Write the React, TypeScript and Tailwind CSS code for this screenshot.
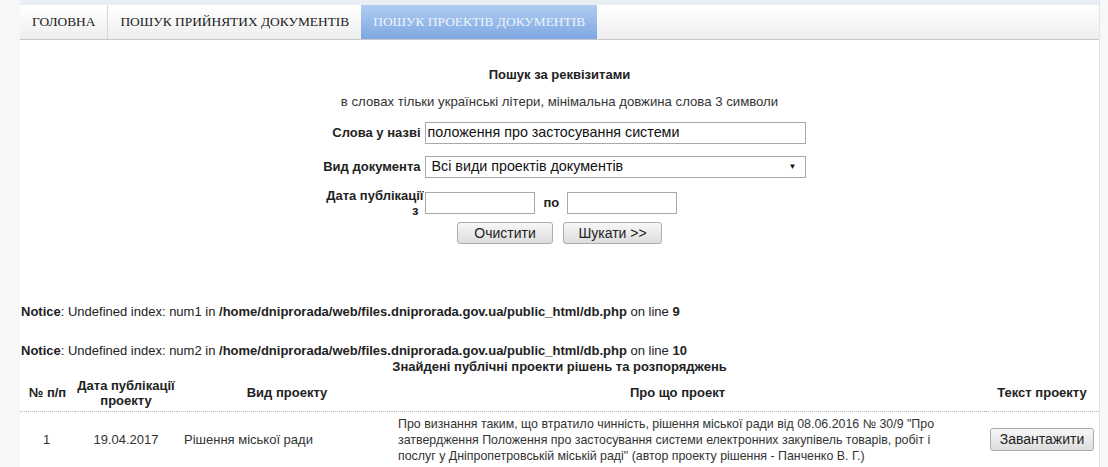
export default function App() {
  const btn =
    "h-[22px] border border-[#acacac] rounded-[3px] bg-linear-to-b from-[#f7f7f7] to-[#dddddd] text-[14px] text-[#222] flex items-center justify-center";
  return (
    <div className="w-[1108px] h-[467px] overflow-hidden bg-[#f7f7f7] flex font-['Liberation_Sans',Arial,sans-serif] text-[13px] text-[#222]">
      <div className="w-[20px] shrink-0" />
      <div className="w-[1080px] shrink-0 bg-white border-r border-[#e3e3e3] flex flex-col">
        <div className="h-[5px] bg-[#e8eef4]" />
        <nav className="h-[35px] flex bg-linear-to-b from-white to-[#eeeeee] border-b border-[#c6c6c6] font-['Liberation_Serif',serif] text-[13.4px] text-[#1a1a1a]">
          <div className="px-3 flex items-center border-r border-[#d8d8d8]">ГОЛОВНА</div>
          <div className="px-3 flex items-center">ПОШУК ПРИЙНЯТИХ ДОКУМЕНТІВ</div>
          <div className="px-3 flex items-center bg-linear-to-b from-[#b2cdf0] to-[#7da7e2] text-[#eef4fc]">
            ПОШУК ПРОЕКТІВ ДОКУМЕНТІВ
          </div>
        </nav>

        <div className="mt-[28px] text-center font-bold leading-[14px]">Пошук за реквізитами</div>
        <div className="mt-[13px] text-center leading-[14px] text-[#333] text-[13.2px]">
          в словах тільки українські літери, мінімальна довжина слова 3 символи
        </div>

        <div className="mt-[13px] flex justify-center pl-[7px]">
          <div className="grid grid-cols-[100px_381px] gap-x-[4px]">
            <div className="h-[22px] flex items-center justify-end font-bold whitespace-nowrap">Слова у назві</div>
            <div className="h-[22px] border border-[#a9a9a9] flex items-center px-[2px] text-[14.3px] text-[#111]">
              положення про застосування системи
            </div>

            <div className="mt-[12px] h-[22px] flex items-center justify-end font-bold whitespace-nowrap">Вид документа</div>
            <div className="mt-[12px] h-[22px] border border-[#a9a9a9] flex items-center justify-between pl-[6px] pr-[8px] text-[14.3px] text-[#111]">
              <span>Всі види проектів документів</span>
              <span className="text-[8px]">▼</span>
            </div>

            <div className="mt-[10px] h-[30px] flex flex-col items-end justify-center font-bold leading-[15px] whitespace-nowrap">
              <span className="-mr-[3px]">Дата публікації</span>
              <span className="pr-[2px]">з</span>
            </div>
            <div className="mt-[10px] h-[30px] flex items-center">
              <div className="w-[110px] h-[22px] border border-[#a9a9a9]" />
              <span className="ml-[9px] font-bold">по</span>
              <div className="ml-[8px] w-[110px] h-[22px] border border-[#a9a9a9]" />
            </div>

            <div className="col-span-2 mt-[4px] flex justify-center gap-[10px] -ml-[7px]">
              <div className={btn + " w-[96px]"}>Очистити</div>
              <div className={btn + " w-[99px]"}>Шукати &gt;&gt;</div>
            </div>
          </div>
        </div>

        <div className="mt-[61px] leading-[14px] pl-[1px]">
          <b>Notice</b>: Undefined index: num1 in <b>/home/dniprorada/web/files.dniprorada.gov.ua/public_html/db.php</b> on line <b>9</b>
        </div>
        <div className="mt-[25px] leading-[14px] pl-[1px]">
          <b>Notice</b>: Undefined index: num2 in <b>/home/dniprorada/web/files.dniprorada.gov.ua/public_html/db.php</b> on line <b>10</b>
        </div>

        <div className="mt-[2px] text-center font-bold leading-[14px]">
          Знайдені публічні проекти рішень та розпоряджень
        </div>

        <table className="table-fixed w-[1079px] border-collapse mt-[1px]">
          <colgroup>
            <col className="w-[55px]" />
            <col className="w-[102px]" />
            <col className="w-[215px]" />
            <col className="w-[593px]" />
            <col className="w-[114px]" />
          </colgroup>
          <thead>
            <tr className="font-bold leading-[15px] text-[#222]">
              <th className="h-[36px] border-b border-dotted border-[#b8b8b8] text-center font-bold whitespace-nowrap">№ п/п</th>
              <th className="h-[36px] border-b border-dotted border-[#b8b8b8] text-center font-bold whitespace-nowrap">
                Дата публікації
                <br />
                проекту
              </th>
              <th className="h-[36px] border-b border-dotted border-[#b8b8b8] text-center font-bold pl-[5px]">Вид проекту</th>
              <th className="h-[36px] border-b border-dotted border-[#b8b8b8] text-center font-bold pr-[22px]">Про що проект</th>
              <th className="h-[36px] border-b border-dotted border-[#b8b8b8] text-center font-bold whitespace-nowrap">Текст проекту</th>
            </tr>
          </thead>
          <tbody className="text-[#333]">
            <tr>
              <td className="text-center align-middle pt-[4px] pr-[2px]">1</td>
              <td className="text-center align-middle pt-[4px]">19.04.2017</td>
              <td className="text-left align-middle pt-[4px] pl-[7px]">Рішення міської ради</td>
              <td className="text-left align-top pt-[4px] pl-[6px] pr-[8px] leading-[16px] text-[12.4px] whitespace-nowrap">
                Про визнання таким, що втратило чинність, рішення міської ради від 08.06.2016 № 30/9 "Про
                <br />
                затвердження Положення про застосування системи електронних закупівель товарів, робіт і
                <br />
                послуг у Дніпропетровській міській раді" (автор проекту рішення - Панченко В. Г.)
              </td>
              <td className="align-middle pt-[4px]">
                <div className="flex justify-center">
                  <div className="h-[23px] w-[104px] border border-[#acacac] rounded-[3px] bg-linear-to-b from-[#f7f7f7] to-[#dddddd] text-[14px] text-[#222] flex items-center justify-center">
                    Завантажити
                  </div>
                </div>
              </td>
            </tr>
          </tbody>
        </table>
      </div>
    </div>
  );
}
